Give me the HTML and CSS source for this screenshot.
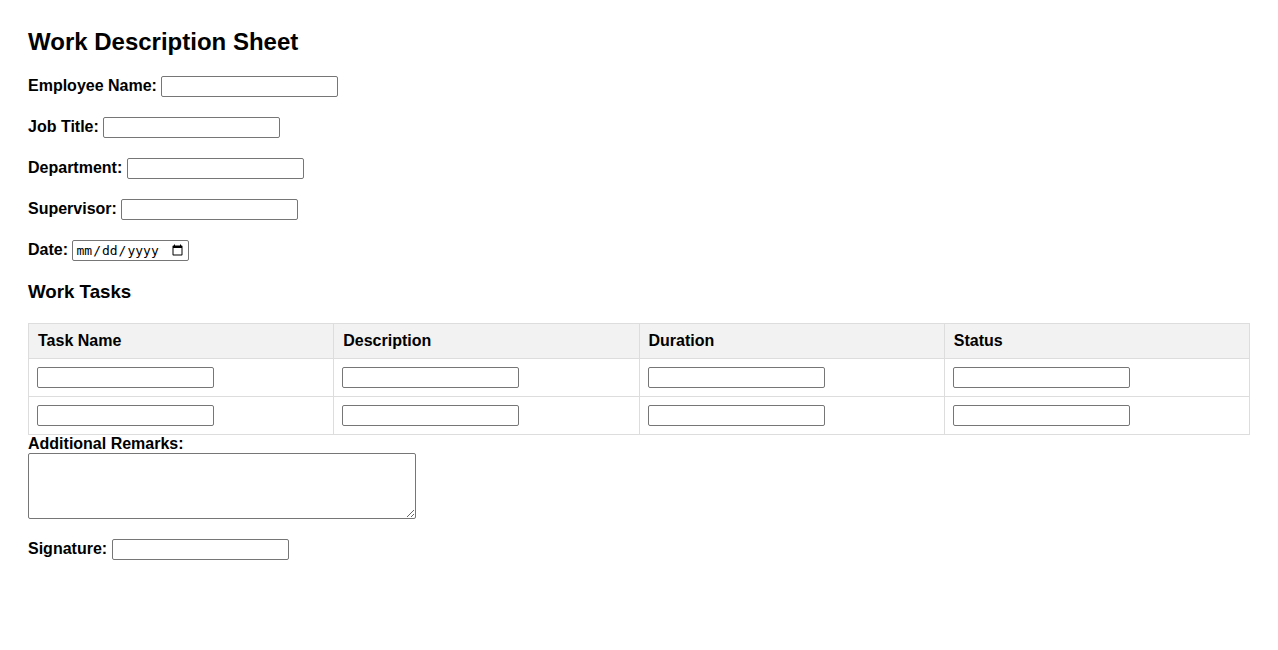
FILE: index.html
```html
<!DOCTYPE html>
<html>
<head>
<meta charset="utf-8">
<title>Work Description Sheet</title>
<link rel="stylesheet" href="styles.css">
</head>
<body>
<div class="container">
  <h1 class="title">Work Description Sheet</h1>
  <div class="row"><label class="lbl">Employee Name:</label> <input class="field" type="text"></div>
  <div class="row"><label class="lbl">Job Title:</label> <input class="field" type="text"></div>
  <div class="row"><label class="lbl">Department:</label> <input class="field" type="text"></div>
  <div class="row"><label class="lbl">Supervisor:</label> <input class="field" type="text"></div>
  <div class="row"><label class="lbl">Date:</label> <input class="field date" type="date"></div>
  <h3 class="subtitle">Work Tasks</h3>
  <table class="tasks">
    <thead>
      <tr><th>Task Name</th><th>Description</th><th>Duration</th><th>Status</th></tr>
    </thead>
    <tbody>
      <tr><td><input class="field" type="text"></td><td><input class="field" type="text"></td><td><input class="field" type="text"></td><td><input class="field" type="text"></td></tr>
      <tr><td><input class="field" type="text"></td><td><input class="field" type="text"></td><td><input class="field" type="text"></td><td><input class="field" type="text"></td></tr>
    </tbody>
  </table>
  <label class="lbl block">Additional Remarks:</label>
  <textarea class="remarks"></textarea>
  <div class="row"><label class="lbl">Signature:</label> <input class="field" type="text"></div>
</div>
</body>
</html>
```
FILE: styles.css
```css
body {
  margin: 8px;
  font-family: "Liberation Sans", Arial, sans-serif;
  font-size: 16px;
  color: #000;
  background: #fff;
}
.container {
  padding: 20px;
}
.title {
  font-size: 24px;
  font-weight: bold;
  margin: 0 0 20px 0;
  line-height: 27px;
}
.row {
  margin: 0 0 20px 0;
  line-height: 21px;
  height: 21px;
}
.lbl {
  font-weight: bold;
  vertical-align: middle;
  position: relative;
  top: -1px;
}
.lbl.block {
  display: block;
  line-height: 18px;
  top: 0;
}
.field {
  box-sizing: border-box;
  width: 177px;
  height: 21px;
  border: 1px solid #767676;
  border-radius: 2px;
  padding: 1px 2px;
  font-family: "Liberation Sans", Arial, sans-serif;
  font-size: 13px;
  background: #fff;
  vertical-align: middle;
  margin: 0;
}
.field.date {
  width: 117px;
  font-family: "DejaVu Sans Mono", monospace;
  font-size: 13px;
  padding: 0 2px;
}
.subtitle {
  font-size: 18.72px;
  font-weight: bold;
  margin: 0 0 20px 0;
  line-height: 23px;
}
.tasks {
  width: 100%;
  border-collapse: collapse;
  table-layout: fixed;
  margin: 0;
}
.tasks th,
.tasks td {
  border: 1px solid #ddd;
  padding: 8px;
  text-align: left;
  vertical-align: middle;
}
.tasks th {
  background: #f2f2f2;
  font-weight: bold;
  line-height: 18px;
  padding-left: 9px;
}
.tasks td {
  line-height: 21px;
}
.tasks td .field {
  display: block;
}
.remarks {
  display: block;
  box-sizing: border-box;
  width: 388px;
  height: 66px;
  border: 1px solid #767676;
  border-radius: 2px;
  margin: 0 0 19px 0;
  padding: 2px;
  font-family: "Liberation Mono", monospace;
  font-size: 13px;
}
```
